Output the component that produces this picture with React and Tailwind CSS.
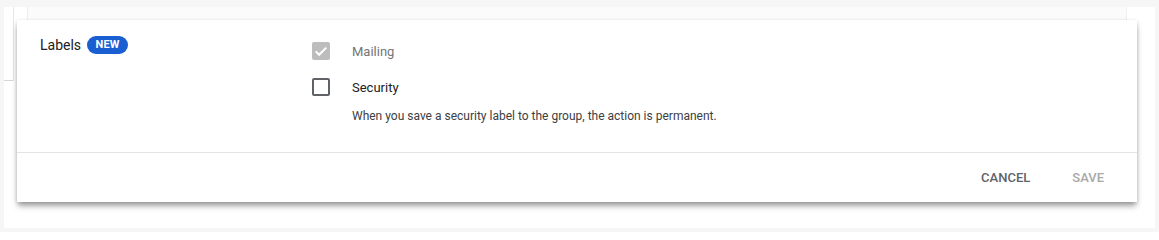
import React from "react";

export default function App() {
  return (
    <div className="w-[1159px] h-[232px] bg-[#f6f6f6] pt-[7px] pl-[4px] pr-[4px] overflow-hidden" style={{ fontFamily: "Roboto, 'Liberation Sans', sans-serif" }}>
      <div className="relative h-[221px] bg-white">
        {/* underlying page fragments */}
        <div className="flex h-[74px]">
          <div className="w-[9px] border-b border-[#d6d6d6]" />
          <div className="w-[14px] border-l border-[#e6e6e6]" />
          <div className="flex-1 border-l border-[#eeeeee] bg-[#fbfbfb]" />
          <div className="w-[29px] border-l border-[#eeeeee]" />
        </div>

        {/* dialog */}
        <div className="absolute left-[13px] top-[13px] w-[1120px] h-[182px] bg-white shadow-[0_5px_6px_-1px_rgba(0,0,0,0.35),0_1px_4px_rgba(0,0,0,0.15)] flex flex-col">
          <div className="flex px-[23px] pt-[16px] pb-[28px]">
            <div className="w-[272px] flex items-start">
              <div className="h-[18px] flex items-center gap-[6px]">
                <span className="text-[14px] font-normal text-[#202124]">Labels</span>
                <span className="h-[18px] w-[41px] rounded-full bg-[#1a5fd1] text-white text-[11px] font-bold flex items-center justify-center tracking-[0.2px]">NEW</span>
              </div>
            </div>
            <div className="flex flex-col mt-[6px]">
              <div className="flex items-center h-[18px]">
                <div className="w-[18px] h-[18px] rounded-[2px] bg-[#bdbdbd] flex items-center justify-center">
                  <svg width="18" height="18" viewBox="0 0 24 24">
                    <path d="M5 12.5l4.5 4.5 9.5-9.5" fill="none" stroke="white" strokeWidth="2.8" />
                  </svg>
                </div>
                <span className="ml-[22px] mt-[2px] text-[13px] text-[#757575]">Mailing</span>
              </div>
              <div className="flex items-center h-[18px] mt-[18px]">
                <div className="w-[18px] h-[18px] rounded-[2px] border-2 border-[#5f6368]" />
                <span className="ml-[22px] mt-[1px] text-[13px] text-[#202124]">Security</span>
              </div>
              <div className="ml-[40px] mt-[11px] h-[17px] flex items-center text-[12px] text-[#3c4043]">
                When you save a security label to the group, the action is permanent.
              </div>
            </div>
          </div>
          <div className="h-px bg-[#e4e4e4]" />
          <div className="flex-1 flex items-center justify-end pr-[33px] gap-[42px] text-[13px] font-medium">
            <span className="text-[#5f6368]">CANCEL</span>
            <span className="text-[#a8a8a8]">SAVE</span>
          </div>
        </div>
      </div>
    </div>
  );
}
